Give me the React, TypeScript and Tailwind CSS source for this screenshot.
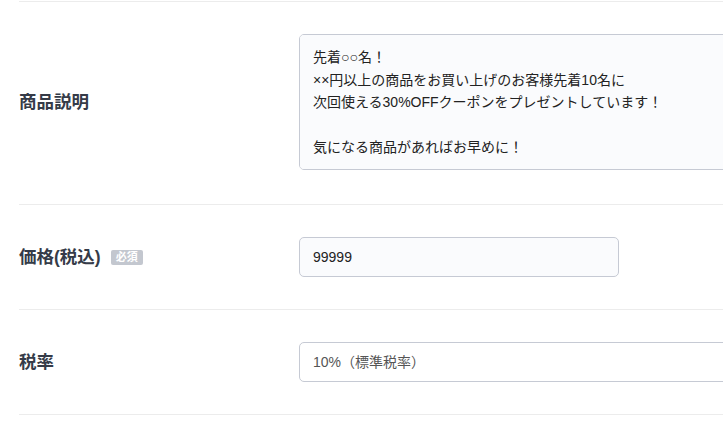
export default function App() {
  const desc =
    "先着○○名！\n××円以上の商品をお買い上げのお客様先着10名に\n次回使える30%OFFクーポンをプレゼントしています！\n\n気になる商品があればお早めに！";

  return (
    <div
      className="w-screen h-screen overflow-hidden bg-white pt-px pl-[19px]"
      style={{ fontFamily: '"Liberation Sans", "Noto Sans CJK JP", sans-serif' }}
    >
      <div className="w-[900px] border-t border-[#ececec]">
        {/* 商品説明 */}
        <div className="flex items-center pt-8 pb-[34px] border-b border-[#ececec]">
          <div className="w-[280px] shrink-0 text-[17.5px] font-bold text-[#353b48]">商品説明</div>
          <textarea
            readOnly
            value={desc}
            className="w-[560px] h-[136px] resize-none rounded-[5px] border border-[#c6cad4] bg-[#fafbfd] px-[13px] py-[11px] text-sm leading-[22.5px] text-[#222] outline-none"
          />
        </div>

        {/* 価格 */}
        <div className="flex items-center py-8 border-b border-[#ececec]">
          <div className="w-[280px] shrink-0 flex items-center gap-[10px]">
            <span className="text-[17.5px] font-bold text-[#353b48]">価格(税込)</span>
            <span className="bg-[#c3c7cf] text-white text-[11px] font-bold leading-[15px] px-[5px] rounded-[2px]">
              必須
            </span>
          </div>
          <input
            readOnly
            value="99999"
            className="w-[320px] h-10 rounded-[5px] border border-[#c6cad4] bg-[#fafbfd] px-[13px] text-sm text-[#222] outline-none"
          />
        </div>

        {/* 税率 */}
        <div className="flex items-center py-8 border-b border-[#ececec]">
          <div className="w-[280px] shrink-0 text-[17.5px] font-bold text-[#353b48]">税率</div>
          <div className="w-[560px] h-10 rounded-[5px] border border-[#c6cad4] bg-white px-[13px] flex items-center text-sm text-[#555]">
            10%（標準税率）
          </div>
        </div>
      </div>
    </div>
  );
}
